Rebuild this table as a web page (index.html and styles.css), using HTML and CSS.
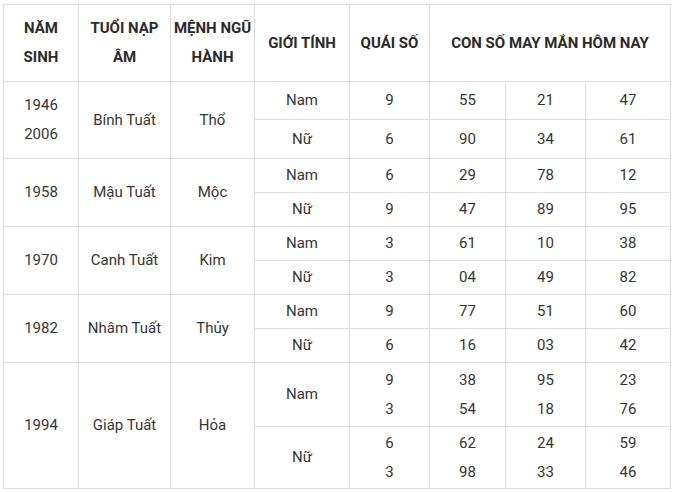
FILE: index.html
```html
<!DOCTYPE html>
<html lang="vi">
<head>
<meta charset="utf-8">
<title>Con số may mắn hôm nay</title>
<link rel="stylesheet" href="styles.css">
</head>
<body>
<div class="table">
  <div class="cell th">NĂM<br>SINH</div>
  <div class="cell th">TUỔI NẠP<br>ÂM</div>
  <div class="cell th">MỆNH NGŨ<br>HÀNH</div>
  <div class="cell th">GIỚI TÍNH</div>
  <div class="cell th">QUÁI SỐ</div>
  <div class="cell th c3">CON SỐ MAY MẮN HÔM NAY</div>

  <div class="cell r2">1946<br>2006</div>
  <div class="cell r2">Bính Tuất</div>
  <div class="cell r2">Thổ</div>
  <div class="cell">Nam</div><div class="cell">9</div><div class="cell">55</div><div class="cell">21</div><div class="cell">47</div>
  <div class="cell">Nữ</div><div class="cell">6</div><div class="cell">90</div><div class="cell">34</div><div class="cell">61</div>

  <div class="cell r2">1958</div>
  <div class="cell r2">Mậu Tuất</div>
  <div class="cell r2">Mộc</div>
  <div class="cell">Nam</div><div class="cell">6</div><div class="cell">29</div><div class="cell">78</div><div class="cell">12</div>
  <div class="cell">Nữ</div><div class="cell">9</div><div class="cell">47</div><div class="cell">89</div><div class="cell">95</div>

  <div class="cell r2">1970</div>
  <div class="cell r2">Canh Tuất</div>
  <div class="cell r2">Kim</div>
  <div class="cell">Nam</div><div class="cell">3</div><div class="cell">61</div><div class="cell">10</div><div class="cell">38</div>
  <div class="cell">Nữ</div><div class="cell">3</div><div class="cell">04</div><div class="cell">49</div><div class="cell">82</div>

  <div class="cell r2">1982</div>
  <div class="cell r2">Nhâm Tuất</div>
  <div class="cell r2">Thủy</div>
  <div class="cell">Nam</div><div class="cell">9</div><div class="cell">77</div><div class="cell">51</div><div class="cell">60</div>
  <div class="cell">Nữ</div><div class="cell">6</div><div class="cell">16</div><div class="cell">03</div><div class="cell">42</div>

  <div class="cell r2">1994</div>
  <div class="cell r2">Giáp Tuất</div>
  <div class="cell r2">Hỏa</div>
  <div class="cell">Nam</div><div class="cell">9<br>3</div><div class="cell">38<br>54</div><div class="cell">95<br>18</div><div class="cell">23<br>76</div>
  <div class="cell">Nữ</div><div class="cell">6<br>3</div><div class="cell">62<br>98</div><div class="cell">24<br>33</div><div class="cell">59<br>46</div>
</div>
</body>
</html>
```
FILE: styles.css
```css
html, body {
  margin: 0;
  padding: 0;
  background: #ffffff;
}
body {
  padding: 4px 0 0 3px;
  font-family: Roboto, "Liberation Sans", Arial, sans-serif;
  font-size: 15px;
  color: #363636;
}
.table {
  display: grid;
  width: max-content;
  grid-template-columns: 75px 92px 84px 95px 80px 76px 80px 85px;
  grid-template-rows: 77px 38px 39px 34px 34px 34px 34px 34px 34px 64px 62px;
  border-top: 1px solid #dddddd;
  border-left: 1px solid #dddddd;
}
.cell {
  box-sizing: border-box;
  display: flex;
  align-items: center;
  justify-content: center;
  text-align: center;
  line-height: 28.8px;
  white-space: nowrap;
  border-right: 1px solid #dddddd;
  border-bottom: 1px solid #dddddd;
}
.th {
  font-weight: bold;
  color: #2b2b2b;
}
.r2 {
  grid-row: span 2;
}
.c3 {
  grid-column: span 3;
}
```
